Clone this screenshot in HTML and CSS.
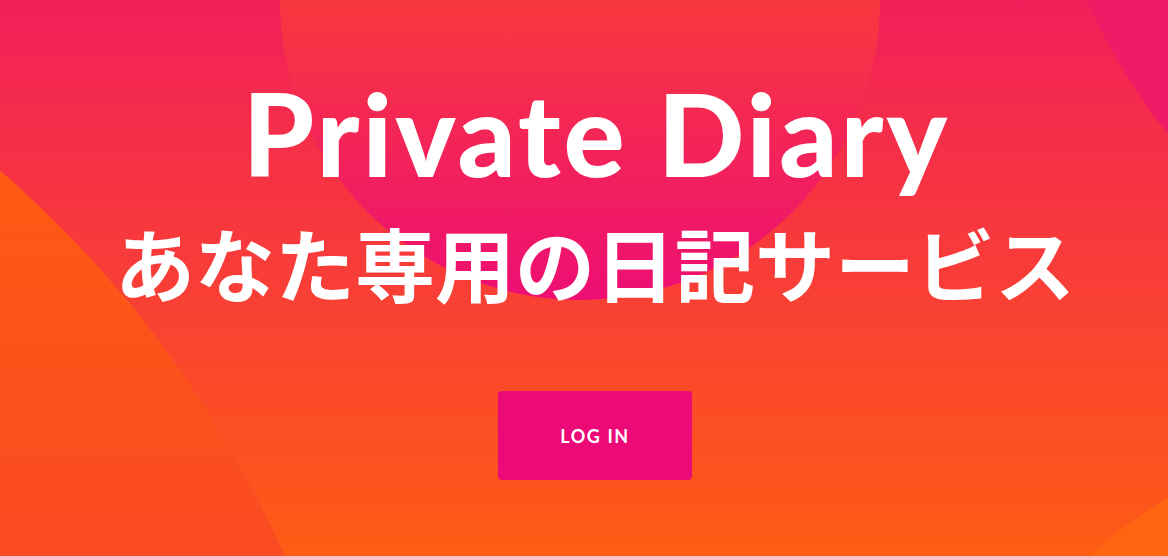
FILE: index.html
```html
<!DOCTYPE html>
<html lang="ja">
<head>
<meta charset="utf-8">
<title>Private Diary</title>
<link rel="stylesheet" href="styles.css">
</head>
<body>
<main class="hero">
  <svg class="hero-bg" width="1168" height="556" viewBox="0 0 1168 556" aria-hidden="true">
    <defs>
      <linearGradient id="gBase" gradientUnits="userSpaceOnUse" x1="0" y1="0" x2="0" y2="556">
        <stop offset="0" stop-color="#F21F5A"/>
        <stop offset="1" stop-color="#FE5C14"/>
      </linearGradient>
      <linearGradient id="gLeft" gradientUnits="userSpaceOnUse" x1="0" y1="160" x2="0" y2="556">
        <stop offset="0" stop-color="#FF5A12"/>
        <stop offset="1" stop-color="#FA4A22"/>
      </linearGradient>
      <linearGradient id="gCenter" gradientUnits="userSpaceOnUse" x1="0" y1="0" x2="0" y2="300">
        <stop offset="0" stop-color="#F8383E"/>
        <stop offset="1" stop-color="#EE0E74"/>
      </linearGradient>
    </defs>
    <rect width="1168" height="556" fill="url(#gBase)"/>
    <circle cx="-717" cy="998" r="1095" fill="url(#gLeft)"/>
    <circle cx="580" cy="0" r="300" fill="url(#gCenter)"/>
    <circle cx="1641" cy="-243" r="605" fill="#F01B66"/>
    <circle cx="1400" cy="900" r="464" fill="#FF6410"/>
  </svg>
  <div class="hero-content">
    <h1 class="title">Private Diary</h1>
    <p class="subtitle">あなた専用の日記サービス</p>
    <a class="login-btn" href="#">LOG IN</a>
  </div>
</main>
</body>
</html>
```

FILE: styles.css
```css
html, body {
  margin: 0;
  padding: 0;
}

body {
  width: 1168px;
  height: 556px;
  overflow: hidden;
  font-family: "Lato", "Noto Sans CJK JP", sans-serif;
}

.hero {
  position: relative;
  width: 1168px;
  height: 556px;
  overflow: hidden;
}

.hero-bg {
  position: absolute;
  left: 0;
  top: 0;
  display: block;
}

.hero-content {
  position: relative;
  display: flex;
  flex-direction: column;
  align-items: center;
  padding: 76px 0 0 22px;
  color: #fff;
}

.title {
  margin: 0;
  padding-left: 3px;
  font-family: "Lato", sans-serif;
  font-weight: 900;
  font-size: 114px;
  line-height: 114px;
  letter-spacing: 3px;
}

.subtitle {
  margin: 31px 0 0;
  font-family: "Noto Sans CJK JP", sans-serif;
  font-weight: 700;
  font-size: 80px;
  line-height: 80px;
}

.login-btn {
  margin-top: 90px;
  width: 194px;
  height: 89px;
  display: flex;
  align-items: center;
  justify-content: center;
  background: #EC0A78;
  border-radius: 4px;
  color: #fff;
  text-decoration: none;
  font-family: "Lato", sans-serif;
  font-weight: 700;
  font-size: 18px;
  letter-spacing: 1.6px;
}
```
